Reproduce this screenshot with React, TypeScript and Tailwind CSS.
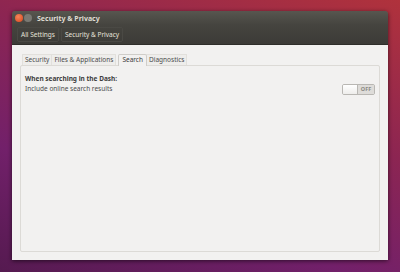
import React from "react";

export default function App() {
  return (
    <div
      className="w-[400px] h-[272px] overflow-hidden bg-[linear-gradient(20deg,#551a50_0%,#72206a_30%,#8c2552_62%,#b0323c_100%)] pt-[11px] pl-[12px]"
      style={{ fontFamily: '"Noto Sans", "DejaVu Sans", sans-serif' }}
    >
      <div className="w-[376px] h-[249px] flex flex-col shadow-[0_1px_4px_rgba(0,0,0,0.6)] rounded-t-[3px] overflow-hidden">
        {/* title bar */}
        <div className="h-[14px] flex items-center bg-[linear-gradient(#57564f,#45443f)] pl-[3px]">
          <div className="w-[8px] h-[8px] rounded-full bg-[radial-gradient(circle_at_40%_35%,#f4865a,#d9441c)]" />
          <div className="w-[8px] h-[8px] rounded-full bg-[#7a7973] ml-[1px]" />
          <span className="ml-[5px] text-[7px] font-bold text-[#dfdbd2] leading-none">Security &amp; Privacy</span>
        </div>
        {/* header bar */}
        <div className="h-[20px] flex items-center bg-[linear-gradient(#45443f,#3c3b37)] pl-[5px] gap-[2px] border-b border-[#2f2e2a]">
          <div className="h-[15px] px-[3px] flex items-center rounded-[2px] border border-[#4a4944] text-[6.5px] text-[#e6e2da]">All Settings</div>
          <div className="h-[15px] px-[3px] flex items-center rounded-[2px] border border-[#4a4944] text-[6.5px] text-[#e6e2da]">Security &amp; Privacy</div>
        </div>
        {/* content */}
        <div className="flex-1 bg-[#f2f1f0] px-[8px] pt-[8px] pb-[8px] flex flex-col">
          <div className="flex items-end h-[12px] pl-[2px] text-[6.5px] text-[#4c4c4c] leading-none">
            <div className="h-[11px] px-[2px] flex items-center border-t border-l border-r border-[#e2e0dc] bg-[#eeedeb]">Security</div>
            <div className="h-[11px] px-[2px] flex items-center border-t border-r border-[#e2e0dc] bg-[#eeedeb]">Files &amp; Applications</div>
            <div className="h-[12px] px-[3px] ml-[2px] flex items-center border-t border-l border-r border-[#cfcdc9] bg-[#f2f1f0] rounded-t-[2px] text-[#3c3c3c] relative top-[1px]">Search</div>
            <div className="h-[11px] px-[2px] flex items-center border-t border-r border-[#e2e0dc] bg-[#eeedeb]">Diagnostics</div>
          </div>
          <div className="flex-1 border border-[#dcdad6] rounded-[2px] px-[4px] pt-[10px]">
            <div className="text-[6.5px] font-bold text-[#3c3c3c] leading-none">When searching in the Dash:</div>
            <div className="flex items-center justify-between mt-[1px]">
              <span className="text-[6.5px] text-[#4c4c4c] leading-none">Include online search results</span>
              <div className="w-[33px] h-[11px] flex rounded-[2px] border border-[#b9b7b3] overflow-hidden">
                <div className="w-[15px] h-full bg-[linear-gradient(#ffffff,#eeedeb)] border-r border-[#b9b7b3]" />
                <div className="flex-1 bg-[#dedcd9] flex items-center justify-center text-[5.5px] font-bold text-[#8a8884]">OFF</div>
              </div>
            </div>
          </div>
        </div>
      </div>
    </div>
  );
}
